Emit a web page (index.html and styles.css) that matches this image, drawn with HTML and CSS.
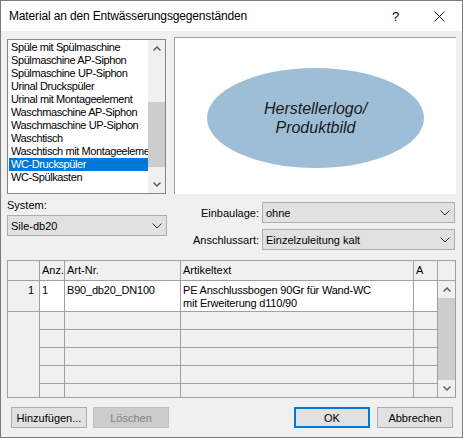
FILE: index.html
```html
<!DOCTYPE html>
<html>
<head>
<meta charset="utf-8">
<link rel="stylesheet" href="styles.css">
</head>
<body>
<div class="window">
  <div class="titlebar">
    <span class="title">Material an den Entwässerungsgegenständen</span>
    <span class="help">?</span>
    <span class="close"><svg width="11" height="11" viewBox="0 0 11 11"><path d="M0.5 0.5 L10.5 10.5 M10.5 0.5 L0.5 10.5" stroke="#111" stroke-width="1" fill="none"/></svg></span>
  </div>
  <div class="content">
    <div class="top">
      <div class="listbox">
        <ul class="items">
          <li>Spüle mit Spülmaschine</li>
          <li>Spülmaschine AP-Siphon</li>
          <li>Spülmaschine UP-Siphon</li>
          <li>Urinal Druckspüler</li>
          <li>Urinal mit Montageelement</li>
          <li>Waschmaschine AP-Siphon</li>
          <li>Waschmaschine UP-Siphon</li>
          <li>Waschtisch</li>
          <li>Waschtisch mit Montageelement</li>
          <li class="selected">WC-Druckspüler</li>
          <li>WC-Spülkasten</li>
        </ul>
        <div class="vscroll list-scroll">
          <div class="arrow"><svg width="8" height="5" viewBox="0 0 8 5"><path d="M0.5 4.5 L4 1 L7.5 4.5" stroke="#606060" stroke-width="1.5" fill="none"/></svg></div>
          <div class="track"><div class="thumb"></div></div>
          <div class="arrow"><svg width="8" height="5" viewBox="0 0 8 5"><path d="M0.5 0.5 L4 4 L7.5 0.5" stroke="#606060" stroke-width="1.5" fill="none"/></svg></div>
        </div>
      </div>
      <div class="preview">
        <div class="ellipse"><span>Herstellerlogo/<br>Produktbild</span></div>
      </div>
    </div>
    <div class="options">
      <div class="system">
        <div class="label">System:</div>
        <div class="combo system-combo"><span>Sile-db20</span><svg class="chev" width="10" height="6" viewBox="0 0 10 6"><path d="M0.5 0.5 L5 5 L9.5 0.5" stroke="#333" stroke-width="1" fill="none"/></svg></div>
      </div>
      <div class="fields">
        <div class="label right">Einbaulage:</div>
        <div class="combo"><span>ohne</span><svg class="chev" width="10" height="6" viewBox="0 0 10 6"><path d="M0.5 0.5 L5 5 L9.5 0.5" stroke="#333" stroke-width="1" fill="none"/></svg></div>
        <div class="label right">Anschlussart:</div>
        <div class="combo"><span>Einzelzuleitung kalt</span><svg class="chev" width="10" height="6" viewBox="0 0 10 6"><path d="M0.5 0.5 L5 5 L9.5 0.5" stroke="#333" stroke-width="1" fill="none"/></svg></div>
      </div>
    </div>
    <div class="grid">
      <div class="c hdr"></div>
      <div class="c hdr">Anz.</div>
      <div class="c hdr">Art-Nr.</div>
      <div class="c hdr">Artikeltext</div>
      <div class="c hdr">A</div>
      <div class="c hdr"></div>

      <div class="c rowhdr">1</div>
      <div class="c cell">1</div>
      <div class="c cell">B90_db20_DN100</div>
      <div class="c cell">PE Anschlussbogen 90Gr für Wand-WC<br>mit Erweiterung d110/90</div>
      <div class="c cell"></div>
      <div class="vscroll grid-scroll">
        <div class="arrow"><svg width="8" height="5" viewBox="0 0 8 5"><path d="M0.5 4.5 L4 1 L7.5 4.5" stroke="#606060" stroke-width="1.5" fill="none"/></svg></div>
        <div class="track"><div class="thumb"></div></div>
        <div class="arrow"><svg width="8" height="5" viewBox="0 0 8 5"><path d="M0.5 0.5 L4 4 L7.5 0.5" stroke="#606060" stroke-width="1.5" fill="none"/></svg></div>
      </div>

      <div class="c blankhdr"></div>
      <div class="c"></div><div class="c"></div><div class="c"></div><div class="c"></div>
      <div class="c"></div><div class="c"></div><div class="c"></div><div class="c"></div>
      <div class="c"></div><div class="c"></div><div class="c"></div><div class="c"></div>
      <div class="c"></div><div class="c"></div><div class="c"></div><div class="c"></div>
      <div class="c"></div><div class="c"></div><div class="c"></div><div class="c"></div>
    </div>
    <div class="buttons">
      <div class="btn">Hinzufügen...</div>
      <div class="btn disabled">Löschen</div>
      <div class="spacer"></div>
      <div class="btn default">OK</div>
      <div class="btn">Abbrechen</div>
    </div>
  </div>
</div>
</body>
</html>
```

FILE: styles.css
```css
html, body {
  margin: 0;
  padding: 0;
  background: #f0f0f0;
}
body {
  font-family: "Liberation Sans", Arial, sans-serif;
  font-size: 11px;
  color: #000;
}
.window {
  width: 463px;
  height: 438px;
  box-sizing: border-box;
  border: 1px solid #7a7a7a;
  background: #f0f0f0;
  display: flex;
  flex-direction: column;
  overflow: hidden;
}
.titlebar {
  height: 30px;
  background: #fff;
  display: flex;
  align-items: center;
  flex-shrink: 0;
}
.title {
  font-family: "Liberation Sans", Arial, sans-serif;
  font-size: 12px;
  letter-spacing: -0.15px;
  margin-left: 8px;
  flex: 1;
  color: #000;
}
.help {
  font-family: "Liberation Sans", Arial, sans-serif;
  font-size: 13px;
  width: 20px;
  margin-right: 22px;
}
.close {
  width: 11px;
  height: 11px;
  margin-right: 17px;
  display: flex;
}
.content {
  flex: 1;
  padding: 6px 6px 0 6px;
  display: flex;
  flex-direction: column;
}
.top {
  display: flex;
  align-items: flex-end;
  height: 157px;
}
.listbox {
  width: 159px;
  height: 155px;
  box-sizing: border-box;
  border: 1px solid #828790;
  background: #fff;
  display: flex;
}
.items {
  list-style: none;
  margin: 0;
  padding: 1px 0 0 1px;
  width: 139px;
  overflow: hidden;
  flex-shrink: 0;
  letter-spacing: -0.4px;
}
.items li {
  height: 13px;
  line-height: 13px;
  white-space: nowrap;
  overflow: hidden;
  padding-left: 2px;
  color: #000;
}
.items li.selected {
  background: #0078d7;
  color: #fff;
}
.vscroll {
  width: 17px;
  background: #f0f0f0;
  display: flex;
  flex-direction: column;
}
.vscroll .arrow {
  height: 17px;
  display: flex;
  align-items: center;
  justify-content: center;
  flex-shrink: 0;
}
.vscroll .track {
  flex: 1;
  display: flex;
  flex-direction: column;
}
.list-scroll .track {
  padding-top: 45px;
  padding-bottom: 9px;
}
.vscroll .thumb {
  flex: 1;
  background: #cdcdcd;
}
.preview {
  margin-left: 8px;
  width: 282px;
  height: 157px;
  box-sizing: border-box;
  border-top: 1px solid #a0a0a0;
  border-left: 1px solid #a0a0a0;
  background: #fff;
  display: flex;
  align-items: center;
  justify-content: center;
  padding-top: 3px;
}
.ellipse {
  width: 217px;
  height: 100px;
  border-radius: 50%;
  background: #9ebed7;
  display: flex;
  align-items: center;
  justify-content: center;
  text-align: center;
  font-family: "Liberation Sans", Arial, sans-serif;
  font-style: italic;
  font-size: 16px;
  line-height: 19px;
  color: #1a1a1a;
}
.options {
  display: flex;
  height: 66px;
}
.system {
  width: 160px;
  padding-top: 4px;
}
.system .label {
  height: 14px;
  line-height: 14px;
}
.combo {
  height: 21px;
  box-sizing: border-box;
  border: 1px solid #adadad;
  background: #e1e1e1;
  display: flex;
  align-items: center;
  padding: 0 4px 0 3px;
}
.combo span {
  flex: 1;
  white-space: nowrap;
}
.system-combo {
  margin-top: 3px;
  width: 160px;
}
.fields {
  margin-left: 9px;
  padding-top: 8px;
  display: grid;
  grid-template-columns: 83px 193px;
  column-gap: 3px;
  row-gap: 6px;
  align-items: center;
  align-content: start;
}
.label.right {
  text-align: right;
}
.grid {
  width: 449px;
  box-sizing: border-box;
  border: 1px solid #a0a0a0;
  background: #a0a0a0;
  display: grid;
  grid-template-columns: 31px 24px 115px 232px 23px 17px;
  grid-template-rows: 19px 30px 17px 17px 17px 17px 13px;
  gap: 1px;
  height: 138px;
}
.grid .c {
  background: #f0f0f0;
  padding: 0 3px;
  white-space: nowrap;
  overflow: hidden;
}
.grid .hdr {
  line-height: 19px;
  padding-left: 2px;
}
.grid .rowhdr {
  text-align: right;
  padding-top: 3px;
  line-height: 13px;
  padding-right: 5px;
}
.grid .cell {
  background: #fff;
  padding-top: 3px;
  line-height: 13px;
  padding-left: 2px;
  letter-spacing: -0.2px;
}
.grid .blankhdr {
  grid-column: 1;
  grid-row: 3 / 8;
}
.grid-scroll {
  grid-column: 6;
  grid-row: 2 / 8;
}
.buttons {
  display: flex;
  margin-top: 9px;
  padding: 0 3px 0 4px;
  gap: 6px;
}
.spacer {
  flex: 1;
}
.btn {
  width: 76px;
  height: 21px;
  box-sizing: border-box;
  border: 1px solid #adadad;
  background: #e1e1e1;
  display: flex;
  align-items: center;
  justify-content: center;
}
.btn.disabled {
  background: #cccccc;
  border-color: #bfbfbf;
  color: #838383;
}
.btn.default {
  border: 2px solid #0078d7;
}
.buttons .btn:last-child {
  margin-left: 1px;
}
```
